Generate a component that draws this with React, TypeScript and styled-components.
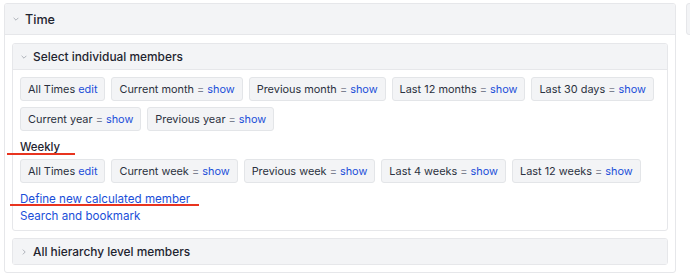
import React from "react";
import styled, { createGlobalStyle } from "styled-components";

const Global = createGlobalStyle`
  html, body { margin: 0; padding: 0; background: #fff; }
  body { font-family: Inter, "Noto Sans", sans-serif; color: #1f2430; }
`;

const Page = styled.div`
  display: flex;
  align-items: flex-start;
  gap: 10px;
  padding: 3px 0 0 4px;
  width: 690px;
  height: 275px;
  box-sizing: border-box;
  overflow: hidden;
  position: relative;
`;

const Panel = styled.section`
  border: 1px solid #e6e7ea;
  border-radius: 3px;
  background: #fff;
  box-sizing: border-box;
  flex: none;
`;

const Outer = styled(Panel)`
  width: 672px;
  display: flex;
  flex-direction: column;
`;

const Sliver = styled(Panel)`
  width: 40px;
  height: 32px;
  background: #f3f4f6;
`;

const Header = styled.div<{ $big?: boolean; $closed?: boolean }>`
  flex: none;
  display: flex;
  align-items: center;
  gap: 6px;
  height: ${(p) => (p.$big ? "30px" : "25px")};
  padding-left: 8px;
  background: #f3f4f6;
  border-bottom: ${(p) => (p.$closed ? "none" : "1px solid #e6e7ea")};
  font-size: ${(p) => (p.$big ? "12.6px" : "11.9px")};
  font-weight: 500;
  color: #1f2430;
  border-radius: 2px 2px 0 0;
`;

const OuterBody = styled.div`
  display: flex;
  flex-direction: column;
  gap: 7px;
  padding: 8px 7px 7px 7px;
`;

const Inner = styled(Panel)`
  width: 656px;
`;

const InnerBody = styled.div`
  display: flex;
  flex-direction: column;
  padding: 7px 7px 5px 7px;
`;

const Row = styled.div`
  display: flex;
  flex-wrap: wrap;
  gap: 6px;
`;

const Chip = styled.div`
  display: flex;
  align-items: center;
  height: 24px;
  box-sizing: border-box;
  padding: 0 7px;
  background: #f3f4f6;
  border: 1px solid #e3e5e8;
  border-radius: 3px;
  font-size: 10.9px;
  color: #2b3140;
`;

const ChipText = styled.span`
  white-space: pre;
`;

const Eq = styled.span`
  color: #7b8190;
`;

const Link = styled.span`
  color: #1b4fd9;
`;

const Group = styled.div`
  margin: 9px 0 5px 0;
  font-size: 11.4px;
  font-weight: 500;
  color: #1f2430;
  height: 14px;
  line-height: 14px;
`;

const Links = styled.div`
  display: flex;
  flex-direction: column;
  margin-top: 8px;
  font-size: 11.6px;
  line-height: 17px;
`;

const Mark = styled.div<{ $left: number; $top: number; $width: number }>`
  position: absolute;
  left: ${(p) => p.$left}px;
  top: ${(p) => p.$top}px;
  width: ${(p) => p.$width}px;
  height: 2px;
  background: #e8341f;
`;

const Chevron = ({ open }: { open: boolean }) => (
  <svg width="6" height="6" viewBox="0 0 6 6" style={{ flex: "none" }}>
    {open ? (
      <path d="M0.6 1.8 L3 4.2 L5.4 1.8" fill="none" stroke="#a7abb3" strokeWidth="0.9" />
    ) : (
      <path d="M1.8 0.6 L4.2 3 L1.8 5.4" fill="none" stroke="#a7abb3" strokeWidth="0.9" />
    )}
  </svg>
);

type Item = { label: string; link: string; edit?: boolean };

const Chips = ({ items }: { items: Item[] }) => (
  <Row>
    {items.map((it) => (
      <Chip key={it.label}>
        <ChipText>
          {it.label + " "}
          {!it.edit && <Eq>{"= "}</Eq>}
          <Link>{it.link}</Link>
        </ChipText>
      </Chip>
    ))}
  </Row>
);

const basic: Item[] = [
  { label: "All Times", link: "edit", edit: true },
  { label: "Current month", link: "show" },
  { label: "Previous month", link: "show" },
  { label: "Last 12 months", link: "show" },
  { label: "Last 30 days", link: "show" },
  { label: "Current year", link: "show" },
  { label: "Previous year", link: "show" },
];

const weekly: Item[] = [
  { label: "All Times", link: "edit", edit: true },
  { label: "Current week", link: "show" },
  { label: "Previous week", link: "show" },
  { label: "Last 4 weeks", link: "show" },
  { label: "Last 12 weeks", link: "show" },
];

export default function App() {
  return (
    <>
      <Global />
      <Page>
        <Outer>
          <Header $big>
            <Chevron open />
            Time
          </Header>
          <OuterBody>
            <Inner>
              <Header>
                <Chevron open />
                Select individual members
              </Header>
              <InnerBody>
                <Chips items={basic} />
                <Group>Weekly</Group>
                <Chips items={weekly} />
                <Links>
                  <Link>Define new calculated member</Link>
                  <Link>Search and bookmark</Link>
                </Links>
              </InnerBody>
            </Inner>
            <Inner>
              <Header $closed>
                <Chevron open={false} />
                All hierarchy level members
              </Header>
            </Inner>
          </OuterBody>
        </Outer>
        <Sliver />
        <Mark $left={7} $top={153} $width={68} />
        <Mark $left={10} $top={204} $width={189} />
      </Page>
    </>
  );
}
